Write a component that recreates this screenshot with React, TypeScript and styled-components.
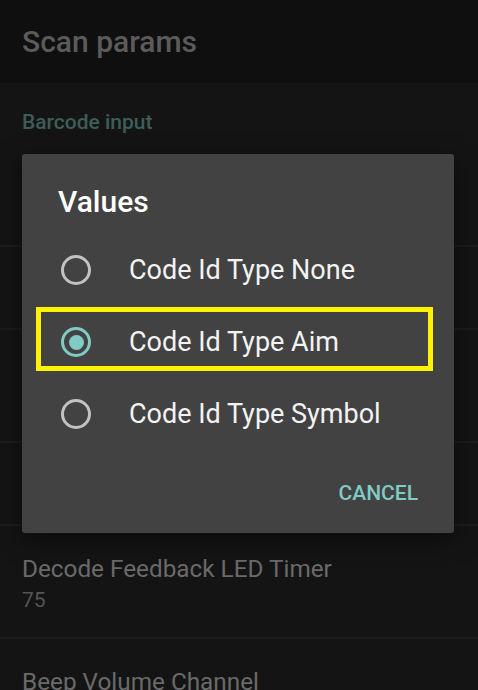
import React from "react";
import styled, { createGlobalStyle } from "styled-components";

const Global = createGlobalStyle`
  html, body { margin: 0; padding: 0; background: #141414; }
  body { font-family: Roboto, "Noto Sans", sans-serif; width: 478px; height: 690px; overflow: hidden; }
  #root { position: relative; width: 478px; height: 690px; }
`;

const Page = styled.div`
  position: relative;
  width: 478px;
  height: 690px;
  overflow: hidden;
  background: #141414;
  display: flex;
  flex-direction: column;
`;

const AppBar = styled.header`
  height: 83px;
  background: #0f0f0f;
  display: flex;
  align-items: center;
  padding-left: 22px;
  flex-shrink: 0;
`;

const AppTitle = styled.h1`
  margin: 0;
  font-size: 30px;
  font-weight: 500;
  line-height: 36px;
  color: #5b5b5b;
`;

const Category = styled.div`
  padding: 27px 22px 30px;
  font-size: 21px;
  font-weight: 500;
  line-height: 24px;
  color: #3d5d59;
`;

const Item = styled.div<{ $tall?: boolean }>`
  box-sizing: border-box;
  height: ${(p) => (p.$tall ? 113 : 83)}px;
  padding: 28px 22px 0;
  border-bottom: 2px solid #1c1c1c;
  flex-shrink: 0;
`;

const ItemTitle = styled.div`
  font-size: 24.3px;
  line-height: 30px;
  color: #6a6a6a;
`;

const ItemSummary = styled.div`
  font-size: 21px;
  line-height: 32px;
  color: #545454;
`;

const Dialog = styled.div`
  position: absolute;
  left: 22px;
  top: 154px;
  width: 432px;
  background: #424242;
  border-radius: 3px;
  box-shadow: 0 6px 24px rgba(0, 0, 0, 0.5);
  display: flex;
  flex-direction: column;
`;

const DialogTitle = styled.h2`
  margin: 0;
  padding: 30px 36px 14px;
  font-size: 30px;
  font-weight: 500;
  line-height: 36px;
  color: #ffffff;
`;

const Options = styled.div`
  display: flex;
  flex-direction: column;
`;

const Option = styled.div`
  position: relative;
  height: 72px;
  display: flex;
  align-items: center;
  padding-left: 39px;
`;

const Radio = styled.span<{ $checked?: boolean }>`
  box-sizing: border-box;
  width: 30px;
  height: 30px;
  border-radius: 50%;
  border: 3px solid ${(p) => (p.$checked ? "#80cbc4" : "#c2c2c2")};
  display: flex;
  align-items: center;
  justify-content: center;
  flex-shrink: 0;
  &::after {
    content: "";
    display: ${(p) => (p.$checked ? "block" : "none")};
    width: 15px;
    height: 15px;
    border-radius: 50%;
    background: #80cbc4;
  }
`;

const OptionLabel = styled.span`
  margin-left: 38px;
  font-size: 27px;
  line-height: 72px;
  color: #f3f3f3;
`;

const Highlight = styled.div`
  position: absolute;
  left: 14px;
  top: 1px;
  width: 397px;
  height: 64px;
  box-sizing: border-box;
  border: 5px solid #fff200;
  pointer-events: none;
`;

const ButtonBar = styled.div`
  display: flex;
  justify-content: flex-end;
  padding: 16px 36px 13px;
`;

const TextButton = styled.button`
  border: none;
  background: transparent;
  padding: 0;
  height: 54px;
  font-family: Roboto, "Noto Sans", sans-serif;
  font-size: 21px;
  font-weight: 500;
  line-height: 54px;
  color: #80cbc4;
  text-transform: uppercase;
  cursor: pointer;
`;

const options = [
  { label: "Code Id Type None", checked: false },
  { label: "Code Id Type Aim", checked: true },
  { label: "Code Id Type Symbol", checked: false },
];

export default function App() {
  return (
    <>
      <Global />
      <Page>
        <AppBar>
          <AppTitle>Scan params</AppTitle>
        </AppBar>
        <Category>Barcode input</Category>
        <Item />
        <Item />
        <Item $tall />
        <Item />
        <Item $tall>
          <ItemTitle>Decode Feedback LED Timer</ItemTitle>
          <ItemSummary>75</ItemSummary>
        </Item>
        <Item $tall>
          <ItemTitle>Beep Volume Channel</ItemTitle>
        </Item>
        <Dialog>
          <DialogTitle>Values</DialogTitle>
          <Options>
            {options.map((o) => (
              <Option key={o.label}>
                <Radio $checked={o.checked} />
                <OptionLabel>{o.label}</OptionLabel>
                {o.checked && <Highlight />}
              </Option>
            ))}
          </Options>
          <ButtonBar>
            <TextButton>Cancel</TextButton>
          </ButtonBar>
        </Dialog>
      </Page>
    </>
  );
}
